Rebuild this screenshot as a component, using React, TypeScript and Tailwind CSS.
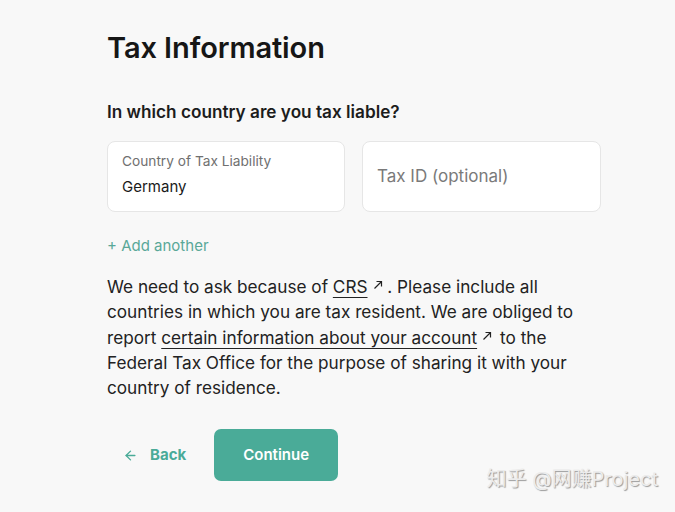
import { ArrowLeft } from 'lucide-react';

const ExternalArrow = ({ after = 0 }: { after?: number }) => (
  <svg
    width="10"
    height="10"
    viewBox="0 0 10 10"
    className={after ? 'inline-block ml-[5px] mr-[8px] mb-[6px]' : 'inline-block ml-[5px] mb-[6px]'}
    fill="none"
    stroke="#222"
    strokeWidth="1.2"
  >
    <path d="M1.5 8.5 L8.5 1.5 M3.5 1.5 H8.5 V6.5" />
  </svg>
);

export default function App() {
  return (
    <div className="min-h-screen w-full bg-[#f8f8f8] text-[#1c1c1c]" style={{ fontFamily: 'Inter, "Noto Sans", sans-serif' }}>
      <div className="relative w-[675px] h-[512px] overflow-hidden">
        <div className="pl-[107px] pr-[74px] pt-[30px]">
          {/* Title */}
          <h1 className="text-[29px] font-semibold leading-[36px] tracking-[-0.1px] text-[#161616]">Tax Information</h1>

          {/* Question */}
          <h2 className="mt-[34px] text-[17.2px] font-semibold leading-[24px] text-[#1c1c1c]">In which country are you tax liable?</h2>

          {/* Fields */}
          <div className="mt-[17px] flex gap-[17px]">
            <div className="w-[239px] h-[71px] rounded-[8px] border border-[#e6e6e6] bg-white px-[14px] pt-[10px]">
              <div className="text-[13.7px] leading-[18px] text-[#707070]">Country of Tax Liability</div>
              <div className="mt-[7px] text-[15px] leading-[20px] text-[#1a1a1a]">Germany</div>
            </div>
            <div className="w-[240px] h-[71px] rounded-[8px] border border-[#e6e6e6] bg-white px-[14px] flex items-center">
              <span className="text-[17px] text-[#7a7a7a]">Tax ID (optional)</span>
            </div>
          </div>

          {/* Add another */}
          <div className="mt-[23px] text-[15px] leading-[22px] text-[#5aa898]">+ Add another</div>

          {/* Explanation */}
          <p className="mt-[17px] w-[470px] text-[17.2px] leading-[25.3px] text-[#222]">
            We need to ask because of{' '}
            <span className="underline underline-offset-[4px] decoration-[1px]">CRS</span>
            <ExternalArrow /> . Please include all countries in which you are tax resident. We are obliged to report{' '}
            <span className="underline underline-offset-[4px] decoration-[1px]">certain information about your account</span>
            <ExternalArrow after={1} />
            to the Federal Tax Office for the purpose of sharing it with your country of residence.
          </p>

          {/* Actions */}
          <div className="mt-[29px] flex items-center">
            <button className="flex items-center gap-[12px] pl-[16px] pr-[28px] h-[52px] text-[15px] font-bold text-[#4aab98]">
              <ArrowLeft size={15} strokeWidth={2.2} />
              Back
            </button>
            <button className="h-[52px] w-[124px] rounded-[7px] bg-[#4aab98] text-[15px] font-semibold text-white">Continue</button>
          </div>
        </div>

        {/* Watermark */}
        <div className="absolute right-[17px] bottom-[18px] text-[20px] text-[#ececec] [text-shadow:1px_1px_1px_#9a9a9a]" style={{ fontFamily: 'Inter, "Noto Sans CJK SC", sans-serif' }}>
          知乎 @网赚Project
        </div>
      </div>
    </div>
  );
}
